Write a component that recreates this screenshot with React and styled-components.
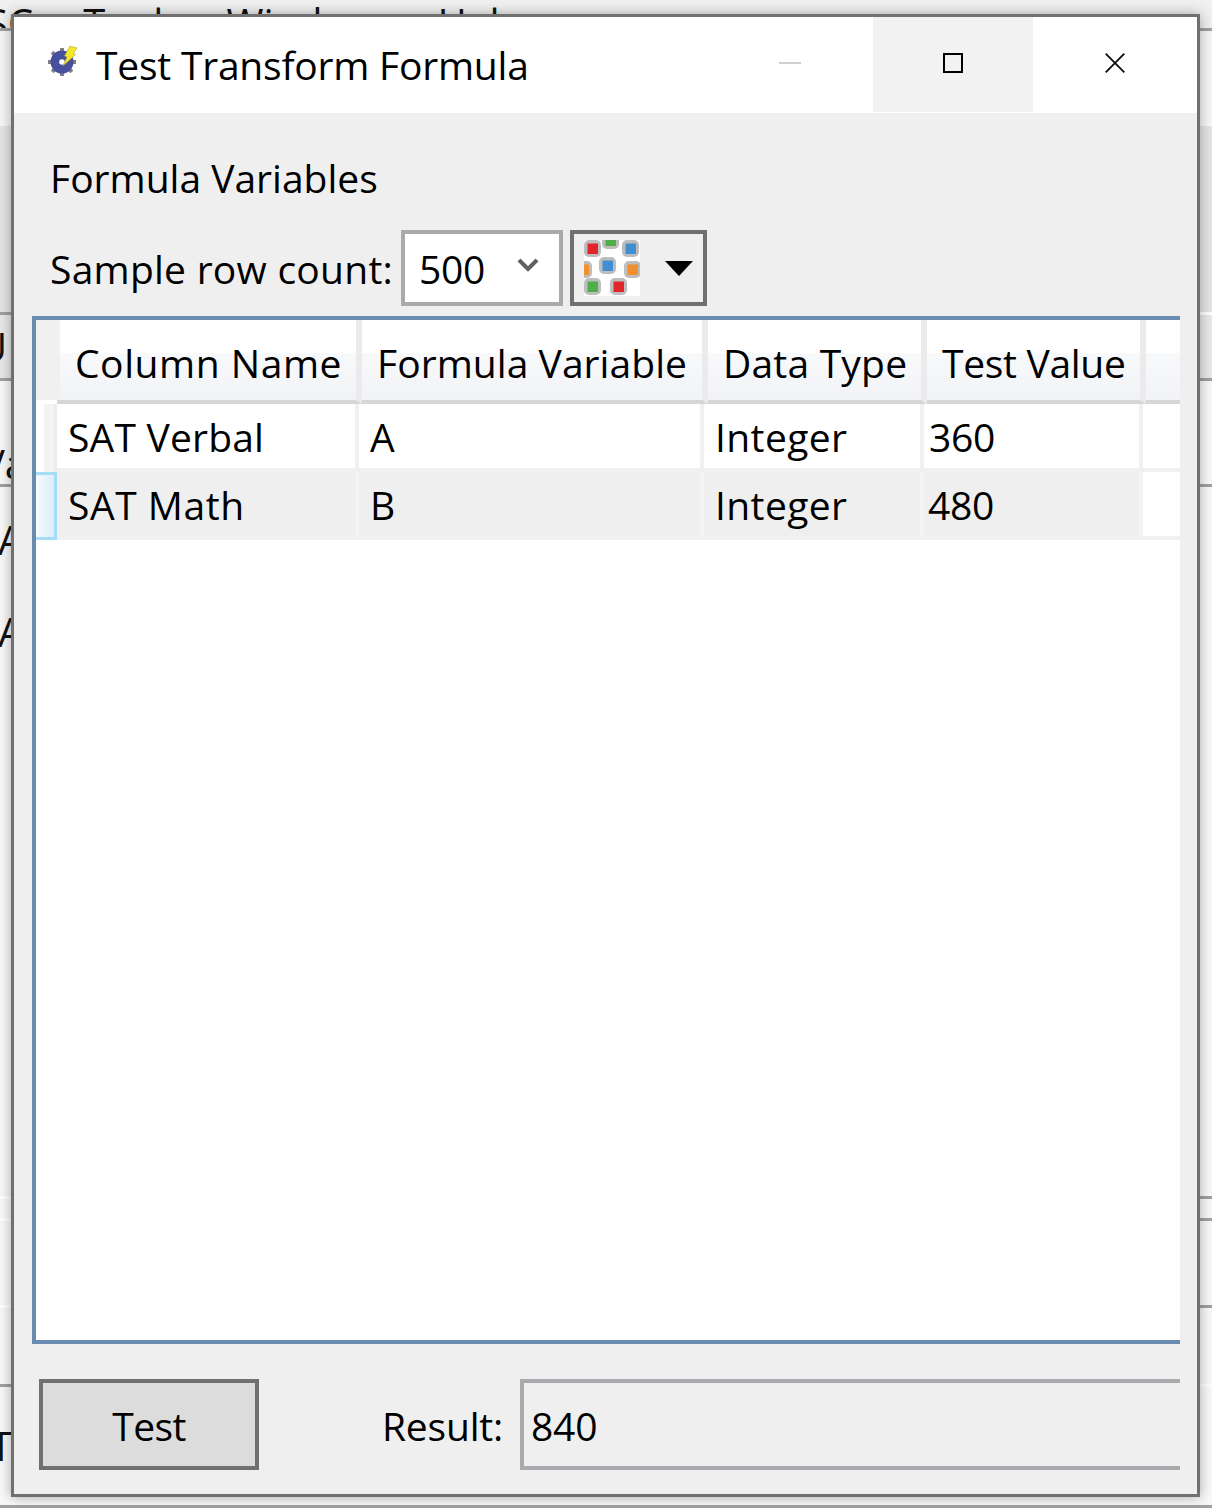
import styled, { createGlobalStyle } from "styled-components";

const GlobalStyle = createGlobalStyle`
  html, body {
    margin: 0;
    padding: 0;
    background: #fff;
  }
  body {
    font-family: "Open Sans", "Noto Sans", sans-serif;
    color: #000;
  }
`;

const Desktop = styled.div`
  position: relative;
  width: 1212px;
  height: 1511px;
  overflow: hidden;
`;

const BackApp = styled.div`
  display: flex;
  flex-direction: column;
  height: 100%;
`;

const BackStrip = styled.div`
  height: ${(p) => p.$h}px;
  flex: none;
  background: ${(p) => p.$bg || "#fff"};
  border-bottom: ${(p) => (p.$line ? "3px solid #a0a0a0" : "none")};
  font-size: 40px;
  line-height: 1;
  white-space: nowrap;
  overflow: hidden;
  display: flex;
  align-items: ${(p) => p.$align || "center"};
  color: #111;
`;

const SideLine = styled.div`
  height: 3px;
  flex: none;
  background: ${(p) =>
    p.$side === "left"
      ? "linear-gradient(90deg, #a0a0a0 20px, transparent 20px)"
      : "linear-gradient(90deg, transparent 1190px, #a0a0a0 1190px)"};
`;

const MenuWord = styled.span`
  margin-left: ${(p) => p.$gap}px;
  margin-top: 3px;
`;

const BackLetter = styled.span`
  margin-left: ${(p) => p.$left || 0}px;
`;

const Window = styled.div`
  position: absolute;
  left: 11px;
  top: 14px;
  width: 1189px;
  height: 1483px;
  box-sizing: border-box;
  border: 3px solid #707070;
  background: #efefef;
  box-shadow: 0 0 12px rgba(0, 0, 0, 0.32);
  display: flex;
  flex-direction: column;
`;

const TitleBar = styled.div`
  height: 96px;
  flex: none;
  background: #fff;
  display: flex;
  align-items: stretch;
`;

const TitleLeft = styled.div`
  flex: 1;
  display: flex;
  align-items: center;
  padding-left: 34px;
  gap: 18px;
`;

const TitleIcon = styled.svg`
  margin-top: -6px;
`;

const TitleText = styled.div`
  font-size: 39px;
  letter-spacing: -0.22px;
  line-height: 1;
  margin-top: -2px;
`;

const WinButton = styled.div`
  width: ${(p) => p.$w}px;
  height: 95px;
  background: ${(p) => p.$bg || "#fff"};
  display: flex;
  align-items: center;
  justify-content: center;
  padding-bottom: 4px;
  box-sizing: border-box;
`;

const Body = styled.div`
  flex: 1;
  display: flex;
  flex-direction: column;
  padding: 0 17px 0 18px;
  min-height: 0;
`;

const SectionTitle = styled.div`
  font-size: 39px;
  letter-spacing: 0;
  line-height: 54px;
  margin: 38px 0 0 18px;
  height: 54px;
`;

const ToolRow = styled.div`
  display: flex;
  align-items: center;
  margin: 25px 0 0 18px;
  height: 76px;
`;

const RowLabel = styled.div`
  font-size: 39px;
  letter-spacing: 0.25px;
  width: 351px;
  flex: none;
  white-space: nowrap;
`;

const SelectBox = styled.div`
  width: 162px;
  height: 76px;
  box-sizing: border-box;
  border: 4px solid #a9a9ae;
  background: #fff;
  font-size: 39px;
  letter-spacing: -0.3px;
  padding-left: 14px;
  display: flex;
  align-items: center;
  justify-content: space-between;
`;

const Chevron = styled.svg`
  width: 22px;
  height: 17px;
  margin: -6px 20px 0 0;
`;

const PaletteButton = styled.div`
  margin-left: 7px;
  width: 137px;
  height: 76px;
  box-sizing: border-box;
  border: 4px solid #707070;
  background: #efefef;
  display: flex;
  align-items: center;
  padding-left: 10px;
  gap: 25px;
`;

const TableFrame = styled.div`
  margin-top: 10px;
  height: 1028px;
  flex: none;
  box-sizing: border-box;
  border: 4px solid #6a8bb0;
  border-right: none;
  background: #fff;
  overflow: hidden;
`;

const HeaderRow = styled.div`
  display: grid;
  grid-template-columns: 24px 302px 346px 219px 219px 1fr;
  height: 84px;
`;

const Corner = styled.div`
  height: 84px;
  background: linear-gradient(#f0f0f0 80px, transparent 80px),
    linear-gradient(90deg, #fff 21px, #d6d6d6 21px);
`;

const HeaderCell = styled.div`
  box-sizing: border-box;
  height: 84px;
  padding: 4px 0 0 15px;
  font-size: 39px;
  letter-spacing: ${(p) => p.$ls}px;
  white-space: nowrap;
  display: flex;
  align-items: center;
  background: linear-gradient(#fff 0, #fff 33px, #f8f9fb 33px, #f2f3f6 80px);
  border-bottom: 4px solid #d6d6d6;
  border-right: 6px solid #ebebeb;
  &:last-child {
    border-right: none;
  }
`;

const DataRow = styled.div`
  display: grid;
  grid-template-columns: 21px 302px 345px 220px 219px 1fr;
  height: ${(p) => p.$h}px;
`;

const RowHead = styled.div`
  box-sizing: border-box;
  height: 100%;
  background: ${(p) =>
    p.$active
      ? "linear-gradient(90deg, #f7fbfe, #d9edf8)"
      : "linear-gradient(90deg, #fff 8px, #f3f3f3 8px, #f3f3f3 18px, #ececec 18px)"};
  border: ${(p) => (p.$active ? "3px solid #a5dcf7" : "none")};
  border-left: none;
`;

const Cell = styled.div`
  box-sizing: border-box;
  font-size: 39px;
  letter-spacing: ${(p) => p.$ls ?? -0.3}px;
  padding-left: ${(p) => p.$pad || 11}px;
  display: flex;
  align-items: center;
  background: ${(p) => (p.$shaded ? "#efefef" : "#fff")};
  border-right: 4px solid ${(p) => (p.$shaded ? "#f3f3f3" : "#f0f0f0")};
  border-bottom: 4px solid #f0f0f0;
`;

const EmptyCell = styled.div`
  background: #fff;
  border-bottom: 4px solid #f0f0f0;
`;

const Footer = styled.div`
  display: flex;
  align-items: stretch;
  margin: 35px 0 0 7px;
  height: 91px;
`;

const TestButton = styled.div`
  width: 220px;
  box-sizing: border-box;
  border: 4px solid #707070;
  background: #dcdcdc;
  font-size: 39px;
  letter-spacing: -0.6px;
  padding-top: 2px;
  display: flex;
  align-items: center;
  justify-content: center;
`;

const ResultLabel = styled.div`
  margin-left: 123px;
  width: 138px;
  flex: none;
  font-size: 39px;
  letter-spacing: -0.2px;
  padding-top: 2px;
  display: flex;
  align-items: center;
`;

const ResultField = styled.div`
  flex: 1;
  box-sizing: border-box;
  border: 4px solid #a9a9ae;
  border-right: none;
  font-size: 39px;
  letter-spacing: -0.2px;
  padding: 2px 0 0 7px;
  display: flex;
  align-items: center;
`;

const GearIcon = () => (
  <TitleIcon width="30" height="32" viewBox="0 0 30 32">
    <g fill="#808080">
      <rect x="12" y="2" width="4" height="28" />
      <rect x="0" y="14" width="28" height="4" />
      <rect x="12" y="2" width="4" height="28" transform="rotate(45 14 16)" />
      <rect x="12" y="2" width="4" height="28" transform="rotate(-45 14 16)" />
    </g>
    <circle cx="14" cy="16" r="11.5" fill="#46509f" />
    <circle cx="14" cy="16" r="2.8" fill="#fff" />
    <path d="M22 0 L29 2 L25 8 L27.5 8.5 L15 20 L19 11 L16.5 10 Z" fill="#f5e82a" stroke="#b5a820" strokeWidth="0.6" />
  </TitleIcon>
);

const PaletteIcon = () => {
  const dots = [
    [9, 9, "#e1252b"],
    [27, 1, "#4fae45"],
    [47, 9, "#3f8fd2"],
    [0, 30, "#f08f2c"],
    [24, 26, "#3f8fd2"],
    [49, 30, "#f08f2c"],
    [9, 47, "#4fae45"],
    [35, 47, "#e1252b"],
  ];
  return (
    <svg width="56" height="56" viewBox="0 0 56 56">
      <rect width="56" height="56" fill="#fff" />
      {dots.map(([cx, cy, c], i) => (
        <g key={i}>
          <rect x={cx - 9} y={cy - 9} width="17" height="17" rx="5" fill="#bdbdbd" />
          <rect x={cx - 5.5} y={cy - 5.5} width="10.5" height="10.5" fill={c} />
        </g>
      ))}
    </svg>
  );
};

const columns = [
  { label: "Column Name", ls: 0.55 },
  { label: "Formula Variable", ls: 0.05 },
  { label: "Data Type", ls: 0.2 },
  { label: "Test Value", ls: -0.3 },
];

const rows = [
  { name: "SAT Verbal", nameLs: 0.2, variable: "A", type: "Integer", value: "360" },
  { name: "SAT Math", nameLs: 0.55, variable: "B", type: "Integer", value: "480" },
];

export default function App() {
  return (
    <>
      <GlobalStyle />
      <Desktop>
        <BackApp>
          <BackStrip $h={28} $bg="#f0f0f0" $line $align="flex-start">
            <MenuWord $gap={-14}>SC</MenuWord>
            <MenuWord $gap={50}>Tools</MenuWord>
            <MenuWord $gap={44}>Window</MenuWord>
            <MenuWord $gap={60}>Help</MenuWord>
          </BackStrip>
          <BackStrip $h={95} $bg="#f6f6f6" />
          <BackStrip $h={186} $bg="#e4e4e4" />
          <SideLine $side="left" />
          <BackStrip $h={63} $bg="#e8e8e8" $line>
            <BackLetter $left={-22}>U</BackLetter>
          </BackStrip>
          <BackStrip $h={103} $bg="#f8f8f8" $line $align="flex-end">
            <BackLetter $left={-19}>Va</BackLetter>
          </BackStrip>
          <BackStrip $h={106} $bg="#f8f8f8">
            <BackLetter $left={-2}>A</BackLetter>
          </BackStrip>
          <BackStrip $h={78} $bg="#f8f8f8">
            <BackLetter $left={-2}>A</BackLetter>
          </BackStrip>
          <BackStrip $h={525} $bg="#f8f8f8" />
          <SideLine $side="right" />
          <BackStrip $h={19} $bg="#f8f8f8" />
          <SideLine $side="right" />
          <BackStrip $h={84} $bg="#f8f8f8" />
          <SideLine $side="right" />
          <BackStrip $h={76} $bg="#f8f8f8" />
          <SideLine $side="left" />
          <BackStrip $h={118} $bg="#f8f8f8">
            <BackLetter $left={-10}>Ty</BackLetter>
          </BackStrip>
          <BackStrip $h={3} $bg="#a0a0a0" />
        </BackApp>

        <Window>
          <TitleBar>
            <TitleLeft>
              <GearIcon />
              <TitleText>Test Transform Formula</TitleText>
            </TitleLeft>
            <WinButton $w={166}>
              <svg width="22" height="2">
                <rect width="22" height="2" fill="#cfcfcf" />
              </svg>
            </WinButton>
            <WinButton $w={160} $bg="#f2f2f2">
              <svg width="20" height="20">
                <rect x="1" y="1" width="18" height="18" fill="none" stroke="#000" strokeWidth="2" />
              </svg>
            </WinButton>
            <WinButton $w={164}>
              <svg width="20" height="20" viewBox="0 0 20 20">
                <path d="M0.7 0.7 L19.3 19.3 M19.3 0.7 L0.7 19.3" stroke="#111" strokeWidth="1.9" fill="none" />
              </svg>
            </WinButton>
          </TitleBar>

          <Body>
            <SectionTitle>Formula Variables</SectionTitle>
            <ToolRow>
              <RowLabel>Sample row count:</RowLabel>
              <SelectBox>
                500
                <Chevron viewBox="0 0 22 17">
                  <path d="M2 3 L11 12 L20 3" stroke="#606060" strokeWidth="4" fill="none" />
                </Chevron>
              </SelectBox>
              <PaletteButton>
                <PaletteIcon />
                <svg width="28" height="15" viewBox="0 0 28 15">
                  <path d="M0 0 H28 L14 15 Z" fill="#000" />
                </svg>
              </PaletteButton>
            </ToolRow>

            <TableFrame>
              <HeaderRow>
                <Corner />
                {columns.map((c) => (
                  <HeaderCell key={c.label} $ls={c.ls}>{c.label}</HeaderCell>
                ))}
                <HeaderCell />
              </HeaderRow>
              <DataRow $h={68}>
                <RowHead />
                <Cell $ls={rows[0].nameLs}>{rows[0].name}</Cell>
                <Cell>{rows[0].variable}</Cell>
                <Cell $ls={0.4}>{rows[0].type}</Cell>
                <Cell $pad={5}>{rows[0].value}</Cell>
                <EmptyCell />
              </DataRow>
              <DataRow $h={68}>
                <RowHead $active />
                <Cell $shaded $ls={rows[1].nameLs}>{rows[1].name}</Cell>
                <Cell $shaded>{rows[1].variable}</Cell>
                <Cell $shaded $ls={0.4}>{rows[1].type}</Cell>
                <Cell $shaded $pad={4}>{rows[1].value}</Cell>
                <EmptyCell />
              </DataRow>
            </TableFrame>

            <Footer>
              <TestButton>Test</TestButton>
              <ResultLabel>Result:</ResultLabel>
              <ResultField>840</ResultField>
            </Footer>
          </Body>
        </Window>
      </Desktop>
    </>
  );
}
